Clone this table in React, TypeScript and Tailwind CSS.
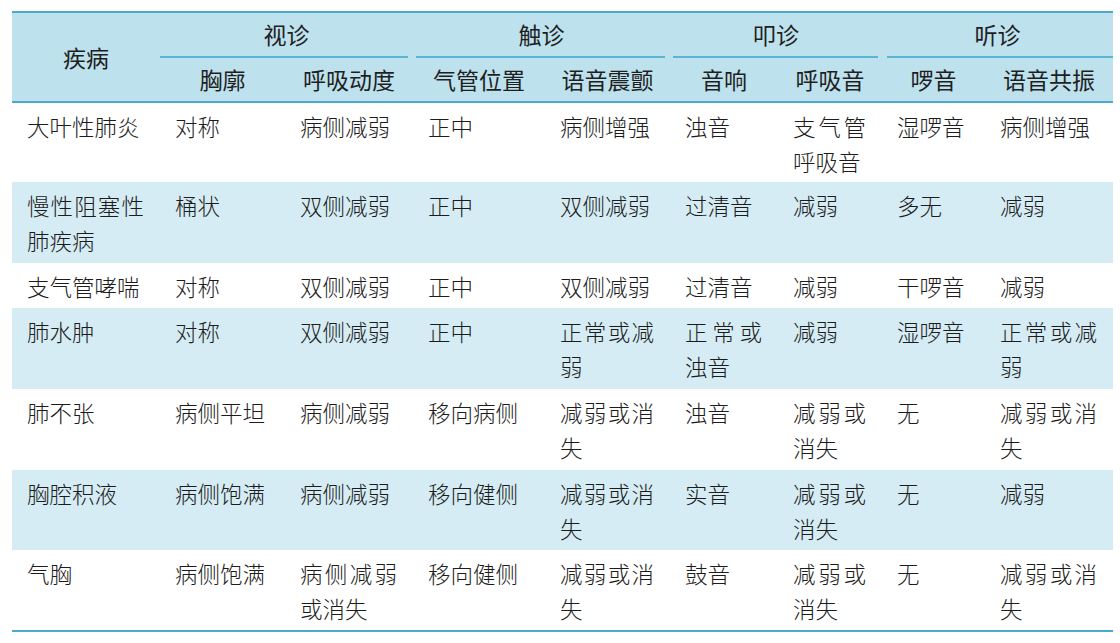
import React from "react";

const widths = [148, 125, 128, 132, 125, 108, 104, 103, 128];

const rows: { h: string; cells: string[] }[] = [
  { h: "h-[80px]", cells: ["大叶性肺炎", "对称", "病侧减弱", "正中", "病侧增强", "浊音", "支气管呼吸音", "湿啰音", "病侧增强"] },
  { h: "h-[81px]", cells: ["慢性阻塞性肺疾病", "桶状", "双侧减弱", "正中", "双侧减弱", "过清音", "减弱", "多无", "减弱"] },
  { h: "h-[45px]", cells: ["支气管哮喘", "对称", "双侧减弱", "正中", "双侧减弱", "过清音", "减弱", "干啰音", "减弱"] },
  { h: "h-[81px]", cells: ["肺水肿", "对称", "双侧减弱", "正中", "正常或减弱", "正常或浊音", "减弱", "湿啰音", "正常或减弱"] },
  { h: "h-[81px]", cells: ["肺不张", "病侧平坦", "病侧减弱", "移向病侧", "减弱或消失", "浊音", "减弱或消失", "无", "减弱或消失"] },
  { h: "h-[80px]", cells: ["胸腔积液", "病侧饱满", "病侧减弱", "移向健侧", "减弱或消失", "实音", "减弱或消失", "无", "减弱"] },
  { h: "h-[80px]", cells: ["气胸", "病侧饱满", "病侧减弱或消失", "移向健侧", "减弱或消失", "鼓音", "减弱或消失", "无", "减弱或消失"] },
];

const groups = [
  { label: "视诊", line: "ml-0 mr-[5px]" },
  { label: "触诊", line: "ml-[3px] mr-[5px]" },
  { label: "叩诊", line: "ml-[3px] mr-[4px]" },
  { label: "听诊", line: "ml-[5px] mr-0" },
];

const subs = ["胸廓", "呼吸动度", "气管位置", "语音震颤", "音响", "呼吸音", "啰音", "语音共振"];

export default function App() {
  return (
    <div
      lang="zh-CN"
      className="w-[1120px] h-[643px] bg-white font-['Noto_Sans_CJK_SC',sans-serif] overflow-hidden"
    >
      <div className="ml-[12px] mt-[11px] w-[1101px] border-t-2 border-b-2 border-[#4aa9cd]">
        <table className="w-[1101px] table-fixed border-collapse">
          <colgroup>
            {widths.map((w, i) => (
              <col key={i} style={{ width: w }} />
            ))}
          </colgroup>
          <thead>
            <tr className="bg-[#bde1ed]">
              <th
                rowSpan={2}
                className="p-0 align-middle text-center text-[23px] font-normal text-[#1f1f1f] border-b-2 border-[#4aa9cd]"
              >
                疾病
              </th>
              {groups.map((g) => (
                <th key={g.label} colSpan={2} className="p-0 font-normal">
                  <div className="h-[43px] flex items-center justify-center text-[23px] text-[#1f1f1f]">
                    {g.label}
                  </div>
                  <div className={`h-[2px] bg-[#5cb5d6] ${g.line}`} />
                </th>
              ))}
            </tr>
            <tr className="bg-[#bde1ed]">
              {subs.map((s) => (
                <th
                  key={s}
                  className="p-0 h-[44px] align-middle text-center text-[23px] font-normal text-[#1f1f1f] border-b-2 border-[#4aa9cd]"
                >
                  {s}
                </th>
              ))}
            </tr>
          </thead>
          <tbody>
            {rows.map((r, ri) => (
              <tr key={ri} className={`${r.h} ${ri % 2 === 1 ? "bg-[#d5ecf4]" : "bg-white"}`}>
                {r.cells.map((c, ci) => (
                  <td
                    key={ci}
                    className="align-top pl-[15px] pr-[16px] pt-[6px] pb-0 text-[22.5px] leading-[35px] text-[#1c1c1c] text-justify font-light break-all"
                  >
                    {c}
                  </td>
                ))}
              </tr>
            ))}
          </tbody>
        </table>
      </div>
    </div>
  );
}
